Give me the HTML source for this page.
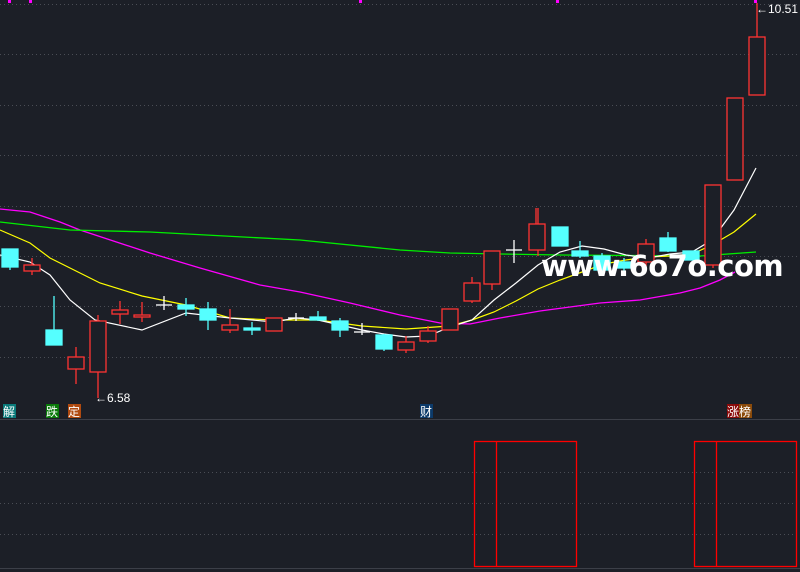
<!DOCTYPE html>
<html><head><meta charset="utf-8"><style>
html,body{margin:0;padding:0;background:#1c1f27;overflow:hidden}
svg{display:block}
.l{font-family:"Liberation Sans","Noto Sans CJK SC",sans-serif;font-size:12px;fill:#fff}
</style></head><body>
<svg width="800" height="572" viewBox="0 0 800 572" xmlns="http://www.w3.org/2000/svg">
<rect width="800" height="572" fill="#1c1f27"/>
<g stroke="#4a4d55" stroke-width="1" stroke-dasharray="1,3">
<line x1="0" y1="4.5" x2="800" y2="4.5"/><line x1="0" y1="54.5" x2="800" y2="54.5"/>
<line x1="0" y1="105.5" x2="800" y2="105.5"/><line x1="0" y1="155.5" x2="800" y2="155.5"/>
<line x1="0" y1="206.5" x2="800" y2="206.5"/><line x1="0" y1="256.5" x2="800" y2="256.5"/>
<line x1="0" y1="306.5" x2="800" y2="306.5"/><line x1="0" y1="357.5" x2="800" y2="357.5"/>
<line x1="0" y1="472.5" x2="800" y2="472.5"/><line x1="0" y1="503.5" x2="800" y2="503.5"/>
<line x1="0" y1="534.5" x2="800" y2="534.5"/>
</g>
<line x1="0" y1="419.5" x2="800" y2="419.5" stroke="#3c3f48"/>
<line x1="0" y1="568.5" x2="800" y2="568.5" stroke="#3c3f48"/>
<g fill="#ff00ff"><rect x="8" y="0" width="3" height="3"/><rect x="29" y="0" width="3" height="3"/><rect x="359" y="0" width="3" height="3"/><rect x="556" y="0" width="3" height="3"/><rect x="754" y="0" width="3" height="3"/></g>
<!-- MAs -->
<polyline fill="none" stroke="#ff00ff" stroke-width="1.3" points="0,209 30,212 60,222 80,230 150,253 200,268 260,285 300,292 350,303 400,315 440,323 470,324 500,318 540,311 600,303 640,300 680,293 700,288 720,280 735,272"/>
<polyline fill="none" stroke="#00ee00" stroke-width="1.3" points="0,222 70,230 150,232 300,240 400,250 450,253 500,254 560,255 700,256 756,252"/>
<polyline fill="none" stroke="#ffff00" stroke-width="1.2" points="0,230 30,243 50,258 70,268 100,283 142,296 186,305 230,318 274,320 318,320 362,326 406,329 450,326 472,320 494,312 516,301 538,289 560,280 582,272 604,264 626,260 648,257 670,256 692,254 712,245 734,232 756,214"/>
<polyline fill="none" stroke="#ffffff" stroke-width="1.2" points="0,255 30,262 50,275 70,300 95,320 142,330 186,313 230,318 274,322 296,318 318,320 340,325 362,330 384,334 406,337 428,336 450,327 472,320 494,300 516,283 538,265 560,252 582,246 604,249 626,255 648,258 670,254 692,252 712,240 734,210 756,168"/>
<!-- candles -->
<g stroke="#ff3333" fill="#1c1f27" stroke-width="1.3">
<line x1="32" y1="258" x2="32" y2="275"/><rect x="24" y="265" width="16" height="6"/>
<line x1="76" y1="347" x2="76" y2="384"/><rect x="68" y="357" width="16" height="12"/>
<line x1="98" y1="315" x2="98" y2="398"/><rect x="90" y="321" width="16" height="51"/>
<line x1="120" y1="301" x2="120" y2="324"/><rect x="112" y="310" width="16" height="4"/>
<line x1="142" y1="302" x2="142" y2="322"/><rect x="134" y="315" width="16" height="2"/>
<line x1="230" y1="309" x2="230" y2="333"/><rect x="222" y="325" width="16" height="5"/>
<rect x="266" y="318" width="16" height="13"/>
<line x1="406" y1="336" x2="406" y2="353"/><rect x="398" y="342" width="16" height="8"/>
<line x1="428" y1="326" x2="428" y2="343"/><rect x="420" y="331" width="16" height="10"/>
<rect x="442" y="309" width="16" height="21"/>
<line x1="472" y1="277" x2="472" y2="303"/><rect x="464" y="283" width="16" height="18"/>
<line x1="492" y1="251" x2="492" y2="290"/><rect x="484" y="251" width="16" height="33"/>
<line x1="538" y1="208" x2="538" y2="256"/><rect x="529" y="224" width="16" height="26"/>
<line x1="536" y1="208" x2="536" y2="224"/>
<line x1="646" y1="239" x2="646" y2="266"/><rect x="638" y="244" width="16" height="18"/>
<line x1="713" y1="185" x2="713" y2="268"/><rect x="705" y="185" width="16" height="80"/>
<line x1="735" y1="98" x2="735" y2="180"/><rect x="727" y="98" width="16" height="82"/>
<line x1="757" y1="3" x2="757" y2="37"/><rect x="749" y="37" width="16" height="58"/>
</g>
<g stroke="#55ffff" fill="#55ffff" stroke-width="1.3">
<line x1="10" y1="249" x2="10" y2="270"/><rect x="2" y="249" width="16" height="18"/>
<line x1="54" y1="296" x2="54" y2="345"/><rect x="46" y="330" width="16" height="15"/>
<line x1="186" y1="298" x2="186" y2="316"/><rect x="178" y="305" width="16" height="4"/>
<line x1="208" y1="302" x2="208" y2="330"/><rect x="200" y="309" width="16" height="11"/>
<line x1="252" y1="322" x2="252" y2="335"/><rect x="244" y="328" width="16" height="2"/>
<line x1="318" y1="311" x2="318" y2="321"/><rect x="310" y="317" width="16" height="3"/>
<line x1="340" y1="318" x2="340" y2="337"/><rect x="332" y="321" width="16" height="9"/>
<line x1="384" y1="334" x2="384" y2="351"/><rect x="376" y="335" width="16" height="14"/>
<rect x="552" y="227" width="16" height="19"/>
<line x1="580" y1="241" x2="580" y2="258"/><rect x="572" y="251" width="16" height="5"/>
<line x1="602" y1="253" x2="602" y2="275"/><rect x="594" y="256" width="16" height="14"/>
<line x1="624" y1="258" x2="624" y2="276"/><rect x="616" y="262" width="16" height="6"/>
<line x1="668" y1="232" x2="668" y2="252"/><rect x="660" y="238" width="16" height="13"/>
<rect x="683" y="251" width="16" height="9"/>
</g>
<g stroke="#ffffff" stroke-width="1.3">
<line x1="164" y1="296" x2="164" y2="310"/><line x1="156" y1="305" x2="172" y2="305"/>
<line x1="296" y1="313" x2="296" y2="321"/><line x1="288" y1="318" x2="304" y2="318"/>
<line x1="362" y1="323" x2="362" y2="335"/><line x1="354" y1="332" x2="370" y2="332"/>
<line x1="514" y1="240" x2="514" y2="263"/><line x1="506" y1="250" x2="522" y2="250"/>
</g>
<!-- volume -->
<g stroke="#ff0000" fill="none" stroke-width="1.3">
<rect x="474.5" y="441.5" width="102" height="125"/><line x1="496.5" y1="441" x2="496.5" y2="567"/>
<rect x="694.5" y="441.5" width="102" height="125"/><line x1="716.5" y1="441" x2="716.5" y2="567"/>
</g>
<!-- watermark -->
<text x="541" y="276" font-family="'DejaVu Sans','Liberation Sans',sans-serif" font-weight="bold" font-size="29" fill="#ffffff" letter-spacing="-0.5">www.6o7o.com</text>
<!-- labels -->
<text x="95" y="402" class="l" fill="#fff">←6.58</text>
<text x="756" y="13" class="l">←10.51</text>
<rect x="3" y="404" width="13" height="14" fill="#0a7a7a"/><text x="3" y="416" class="l">解</text>
<rect x="46" y="404" width="13" height="14" fill="#0a7a0a"/><text x="46" y="416" class="l">跌</text>
<rect x="68" y="404" width="13" height="14" fill="#b04a10"/><text x="68" y="416" class="l">定</text>
<rect x="420" y="404" width="13" height="14" fill="#0c3a6a"/><text x="420" y="416" class="l">财</text>
<rect x="727" y="404" width="13" height="14" fill="#8a0a0a"/><text x="727" y="416" class="l">涨</text>
<rect x="739" y="404" width="13" height="14" fill="#8a4a0a"/><text x="739" y="416" class="l">榜</text>
</svg>
</body></html>
